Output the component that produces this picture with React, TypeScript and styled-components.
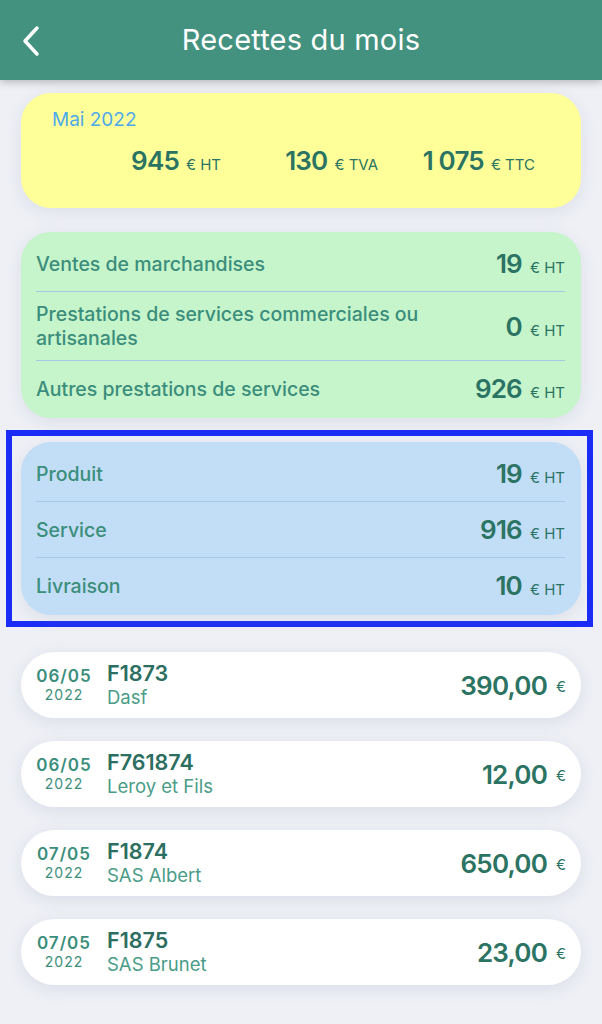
import styled, { createGlobalStyle } from "styled-components"

const GlobalStyle = createGlobalStyle`
    body {
        margin: 0;
        background-color: #eef0f5;
        font-family: Inter, "Noto Sans", sans-serif;
    }
`

const Page = styled.div`
    min-height: 1024px;
    background-color: #eef0f5;
`

const Header = styled.header`
    height: 80px;
    background-color: #43927f;
    box-shadow: 0 2px 8px rgba(0, 0, 0, 0.25);
    display: flex;
    align-items: center;
    justify-content: center;
    position: relative;

    .back {
        position: absolute;
        left: 21px;
        top: 24px;
    }
    h1 {
        margin: 0 0 2px;
        color: #ffffff;
        font-weight: 400;
        font-size: 29px;
        letter-spacing: 0.2px;
    }
`

const Content = styled.main`
    display: flex;
    flex-direction: column;
    gap: 24px;
    padding: 13px 21px 30px;
`

const Card = styled.section<{ $bg: string }>`
    background-color: ${(p) => p.$bg};
    border-radius: 30px;
    box-shadow: 0 4px 16px rgba(140, 150, 180, 0.18);
`

const SummaryCard = styled(Card)`
    height: 115px;
    box-sizing: border-box;
    padding: 16px 46px 0 31px;

    .month {
        color: #4ea9ea;
        font-size: 19px;
        line-height: 22px;
    }
`

const Totals = styled.div`
    display: grid;
    grid-template-columns: repeat(3, 157px);
    justify-content: end;
    margin-top: 12px;
`

const Total = styled.div`
    display: flex;
    justify-content: flex-end;
    align-items: baseline;
    gap: 7px;
`

const Big = styled.span`
    font-size: 26px;
    font-weight: 600;
    letter-spacing: -0.8px;
    color: #2b7362;
    line-height: 35px;
`

const Unit = styled.span`
    font-size: 15px;
    color: #2b7362;
`

const ListCard = styled(Card)`
    padding: 4px 16px 2px 15px;
`

const Row = styled.div<{ $line: string }>`
    display: flex;
    align-items: center;
    justify-content: space-between;
    gap: 16px;
    padding: 10px 0;
    min-height: 35px;

    & + & {
        border-top: 1px solid ${(p) => p.$line};
    }
`

const Label = styled.div`
    color: #3b8e7b;
    font-size: 19.5px;
    font-weight: 500;
    line-height: 24px;
    max-width: 420px;
`

const Value = styled.div`
    display: flex;
    align-items: baseline;
    gap: 8px;
    white-space: nowrap;
`

const Highlight = styled.div`
    border: 6px solid #1a2cf5;
    padding: 6px 6px 6px 9px;
    margin: -12px -12px 1px -15px;
`

const Invoice = styled.div`
    height: 66px;
    background-color: #ffffff;
    border-radius: 33px;
    box-shadow: 0 4px 16px rgba(140, 150, 180, 0.2);
    display: flex;
    align-items: center;
    padding: 0 15px 0 15px;
    margin-bottom: -1px;
`

const DateBox = styled.div`
    width: 56px;
    text-align: center;
    color: #3b8e7b;

    .day {
        font-size: 17px;
        font-weight: 600;
        letter-spacing: 1px;
        line-height: 20px;
    }
    .year {
        font-size: 14px;
        letter-spacing: 1px;
        line-height: 18px;
    }
`

const InvoiceInfo = styled.div`
    margin-left: 15px;
    flex: 1;

    .num {
        color: #2c6e5f;
        font-size: 21.5px;
        font-weight: 600;
        line-height: 24px;
    }
    .client {
        color: #4a9c88;
        font-size: 18.5px;
        line-height: 24px;
    }
`

const Amount = styled.div`
    display: flex;
    align-items: baseline;
    gap: 9px;

    .euro {
        font-size: 15px;
        color: #2b7362;
        transform: translateY(-3px);
    }
`

const categories = [
    { label: "Ventes de marchandises", value: "19" },
    { label: "Prestations de services commerciales ou artisanales", value: "0" },
    { label: "Autres prestations de services", value: "926" },
]

const types = [
    { label: "Produit", value: "19" },
    { label: "Service", value: "916" },
    { label: "Livraison", value: "10" },
]

const invoices = [
    { day: "06/05", year: "2022", num: "F1873", client: "Dasf", amount: "390,00" },
    { day: "06/05", year: "2022", num: "F761874", client: "Leroy et Fils", amount: "12,00" },
    { day: "07/05", year: "2022", num: "F1874", client: "SAS Albert", amount: "650,00" },
    { day: "07/05", year: "2022", num: "F1875", client: "SAS Brunet", amount: "23,00" },
]

export default function App() {
    return (
        <Page>
            <GlobalStyle />
            <Header>
                <svg className="back" width="22" height="34" viewBox="0 0 22 34">
                    <polyline
                        points="16,4 4,17 16,30"
                        fill="none"
                        stroke="#ffffff"
                        strokeWidth="3.5"
                        strokeLinecap="round"
                        strokeLinejoin="round"
                    />
                </svg>
                <h1>Recettes du mois</h1>
            </Header>
            <Content>
                <SummaryCard $bg="#ffff99">
                    <div className="month">Mai 2022</div>
                    <Totals>
                        <Total>
                            <Big>945</Big>
                            <Unit>€ HT</Unit>
                        </Total>
                        <Total>
                            <Big>130</Big>
                            <Unit>€ TVA</Unit>
                        </Total>
                        <Total>
                            <Big>1 075</Big>
                            <Unit>€ TTC</Unit>
                        </Total>
                    </Totals>
                </SummaryCard>

                <ListCard $bg="#c6f4cb">
                    {categories.map((c) => (
                        <Row key={c.label} $line="#b0e0b8">
                            <Label>{c.label}</Label>
                            <Value>
                                <Big>{c.value}</Big>
                                <Unit>€ HT</Unit>
                            </Value>
                        </Row>
                    ))}
                </ListCard>

                <Highlight>
                    <ListCard $bg="#c2ddf6">
                        {types.map((t) => (
                            <Row key={t.label} $line="#a8c7e2">
                                <Label>{t.label}</Label>
                                <Value>
                                    <Big>{t.value}</Big>
                                    <Unit>€ HT</Unit>
                                </Value>
                            </Row>
                        ))}
                    </ListCard>
                </Highlight>

                {invoices.map((inv) => (
                    <Invoice key={inv.num}>
                        <DateBox>
                            <div className="day">{inv.day}</div>
                            <div className="year">{inv.year}</div>
                        </DateBox>
                        <InvoiceInfo>
                            <div className="num">{inv.num}</div>
                            <div className="client">{inv.client}</div>
                        </InvoiceInfo>
                        <Amount>
                            <Big>{inv.amount}</Big>
                            <span className="euro">€</span>
                        </Amount>
                    </Invoice>
                ))}
            </Content>
        </Page>
    )
}
